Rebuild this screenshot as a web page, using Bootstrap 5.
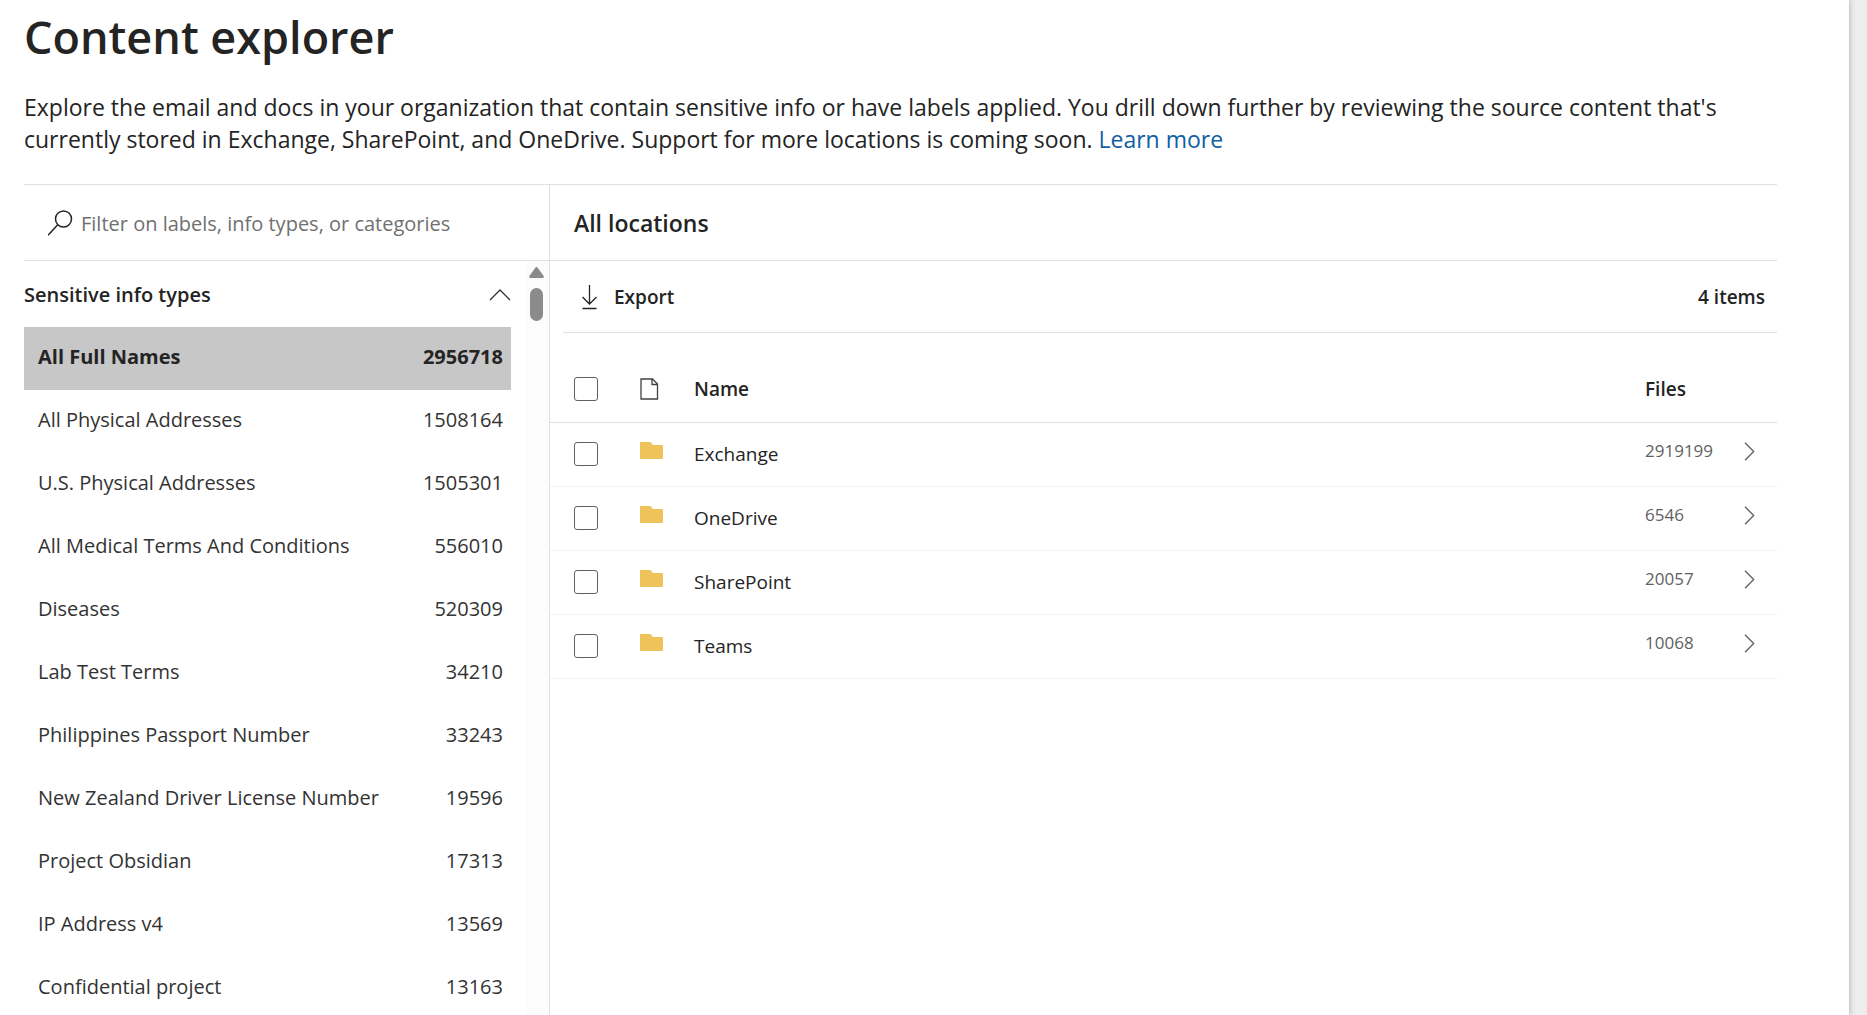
<!DOCTYPE html>
<html lang="en">
<head>
<meta charset="utf-8">
<meta name="viewport" content="width=device-width, initial-scale=1">
<title>Content explorer</title>
<link rel="stylesheet" href="https://cdn.jsdelivr.net/npm/bootstrap@5.3.0/dist/css/bootstrap.min.css">
<style>
body { font-family: "Open Sans", "Noto Sans", sans-serif; font-size: 20px; color: #242424; background: #ededed; }
.shell { height: 100vh; margin-right: 18px; padding: 7px 72px 0 24px; background: #fff; box-shadow: 0 0 6px rgba(0,0,0,.3); }
.page-title { font-size: 45px; line-height: 60px; font-weight: 600; margin-bottom: 24px; }
.intro { font-size: 23px; line-height: 32px; margin-bottom: 29px; }
.intro a { color: #115ea3; text-decoration: none; }
.explorer { border-top: 1px solid #e0e0e0; min-height: 0; }
.side { width: 526px; border-right: 1px solid #e0e0e0; flex-shrink: 0; min-height: 0; }
.bar { height: 76px; border-bottom: 1px solid #e0e0e0; flex-shrink: 0; }
.filter-box { border: 0; outline: 0; background: none; color: #242424; padding: 2px 0 0; line-height: 28px; }
.filter-box::placeholder { color: #707070; opacity: 1; }
.pane-title { font-size: 23px; font-weight: 600; line-height: 32px; margin: 0; }
.group-toggle { height: 66px; width: 100%; border: 0; padding: 2px 0 0; background: none; color: inherit; font-weight: 600; }
.types { width: 487px; overflow: hidden; }
.type-row { height: 63px; padding: 0 8px 3px 14px; color: #333; text-decoration: none; }
.type-row.chosen { background: #c7c7c7; font-weight: 700; color: #242424; }
.track { width: 23px; background: #fcfcfc; padding: 6px 2px 0 0; }
.thumb { width: 13px; height: 33px; margin-top: 10px; border-radius: 7px; background: #8b8b8b; }
.toolbar { height: 72px; margin-left: 13px; padding: 2px 12px 0 18px; border-bottom: 1px solid #e0e0e0; font-size: 19px; font-weight: 600; }
.export-btn { border: 0; background: none; padding: 0; color: inherit; font-weight: 600; gap: 16px; }
.loc-table { width: 100%; margin-top: 24px; font-size: 19px; border-collapse: separate; border-spacing: 0; table-layout: fixed; }
.loc-table th, .loc-table td { height: 64px; padding: 0; vertical-align: middle; border-bottom: 1px solid #f3f3f3; }
.loc-table thead th { height: 66px; font-weight: 600; border-bottom-color: #e0e0e0; }
.loc-table .tick { width: 90px; padding: 0 0 2px 24px; }
.loc-table .kind { width: 54px; padding-bottom: 2px; }
.loc-table .files { width: 99px; }
.loc-table .open { width: 33px; }
.loc-table td.kind { padding-bottom: 9px; }
.loc-table td.files { font-size: 17px; color: #616161; padding-bottom: 7px; }
.loc-table td.open { padding-bottom: 6px; }
.loc-table .form-check-input { width: 24px; height: 24px; margin: 0; border: 1px solid #616161; border-radius: 3px; }
svg { display: block; flex-shrink: 0; }
</style>
<script src="https://cdn.jsdelivr.net/npm/bootstrap@5.3.0/dist/js/bootstrap.bundle.min.js"></script>
</head>
<body class="overflow-hidden">
<svg width="0" height="0" class="position-absolute" aria-hidden="true">
  <symbol id="folder" viewBox="0 0 23 17"><path d="M1 0h9.500l2.500 3h9q1 0 1 1v12q0 1-1 1h-21q-1 0-1-1v-15q0-1 1-1z" fill="#f0c25a"/></symbol>
  <symbol id="next" viewBox="0 0 11 19"><path d="M1 .8 9.700 9.500 1 18.200" fill="none" stroke="#616161" stroke-width="1.300"/></symbol>
</svg>
<main class="shell d-flex flex-column">
  <h1 class="page-title">Content explorer</h1>
  <p class="intro">Explore the email and docs in your organization that contain sensitive info or have labels applied. You drill down further by reviewing the source content that's currently stored in Exchange, SharePoint, and OneDrive. Support for more locations is coming soon. <a href="#">Learn more</a></p>
  <div class="explorer d-flex flex-grow-1">
    <aside class="side d-flex flex-column">
      <div class="bar d-flex align-items-center ps-4">
        <svg width="25" height="26" viewBox="0 0 25 26" class="me-2" fill="none" stroke="#242424" stroke-width="1.500" aria-hidden="true"><circle cx="15.500" cy="9" r="8"/><path d="M9.700 14.800.1 25.200"/></svg>
        <input class="filter-box flex-grow-1" type="text" aria-label="Filter" placeholder="Filter on labels, info types, or categories">
      </div>
      <div class="d-flex flex-grow-1 justify-content-between overflow-hidden">
        <div class="types">
          <button class="group-toggle d-flex align-items-center justify-content-between" type="button" aria-expanded="true">Sensitive info types
            <svg width="22" height="12" viewBox="0 0 22 12" fill="none" stroke="#333" stroke-width="1.300" aria-hidden="true"><path d="M1 11 11 1l10 10"/></svg>
          </button>
          <nav>
            <a href="#" class="type-row chosen d-flex align-items-center justify-content-between"><span>All Full Names</span><span>2956718</span></a>
            <a href="#" class="type-row d-flex align-items-center justify-content-between"><span>All Physical Addresses</span><span>1508164</span></a>
            <a href="#" class="type-row d-flex align-items-center justify-content-between"><span>U.S. Physical Addresses</span><span>1505301</span></a>
            <a href="#" class="type-row d-flex align-items-center justify-content-between"><span>All Medical Terms And Conditions</span><span>556010</span></a>
            <a href="#" class="type-row d-flex align-items-center justify-content-between"><span>Diseases</span><span>520309</span></a>
            <a href="#" class="type-row d-flex align-items-center justify-content-between"><span>Lab Test Terms</span><span>34210</span></a>
            <a href="#" class="type-row d-flex align-items-center justify-content-between"><span>Philippines Passport Number</span><span>33243</span></a>
            <a href="#" class="type-row d-flex align-items-center justify-content-between"><span>New Zealand Driver License Number</span><span>19596</span></a>
            <a href="#" class="type-row d-flex align-items-center justify-content-between"><span>Project Obsidian</span><span>17313</span></a>
            <a href="#" class="type-row d-flex align-items-center justify-content-between"><span>IP Address v4</span><span>13569</span></a>
            <a href="#" class="type-row d-flex align-items-center justify-content-between"><span>Confidential project</span><span>13163</span></a>
          </nav>
        </div>
        <div class="track d-flex flex-column align-items-center" aria-hidden="true">
          <svg width="15" height="11" viewBox="0 0 15 11"><path d="M6.300.8q1.200-1.600 2.400 0l5.800 8q1 2.200-1 2.200h-12q-2 0-1-2.200z" fill="#8b8b8b"/></svg>
          <div class="thumb"></div>
        </div>
      </div>
    </aside>
    <section class="flex-grow-1">
      <div class="bar d-flex align-items-center ps-4"><h2 class="pane-title">All locations</h2></div>
      <div class="toolbar d-flex align-items-center justify-content-between">
        <button class="export-btn d-flex align-items-center" type="button">
          <svg width="17" height="25" viewBox="0 0 17 25" fill="none" stroke="#242424" stroke-width="1.300" aria-hidden="true"><path d="M8.500 0v19M1.500 12l7 7 7-7M1.500 23.500h14"/></svg>Export</button>
        <span>4 items</span>
      </div>
      <table class="loc-table">
        <thead>
          <tr>
            <th class="tick"><input class="form-check-input d-block" type="checkbox" aria-label="Select all"></th>
            <th class="kind"><svg width="19" height="22" viewBox="0 0 19 22" fill="none" stroke="#424242" stroke-width="1.300" role="img" aria-label="Type"><path d="M1 1h11.500l5 5v15h-16.500zM12 1v5.500h5.500"/></svg></th>
            <th>Name</th><th class="files">Files</th><th class="open"></th>
          </tr>
        </thead>
        <tbody>
          <tr><td class="tick"><input class="form-check-input d-block" type="checkbox" aria-label="Select Exchange"></td><td class="kind"><svg width="23" height="17"><use href="#folder"/></svg></td><td>Exchange</td><td class="files">2919199</td><td class="open"><svg width="11" height="19"><use href="#next"/></svg></td></tr>
          <tr><td class="tick"><input class="form-check-input d-block" type="checkbox" aria-label="Select OneDrive"></td><td class="kind"><svg width="23" height="17"><use href="#folder"/></svg></td><td>OneDrive</td><td class="files">6546</td><td class="open"><svg width="11" height="19"><use href="#next"/></svg></td></tr>
          <tr><td class="tick"><input class="form-check-input d-block" type="checkbox" aria-label="Select SharePoint"></td><td class="kind"><svg width="23" height="17"><use href="#folder"/></svg></td><td>SharePoint</td><td class="files">20057</td><td class="open"><svg width="11" height="19"><use href="#next"/></svg></td></tr>
          <tr><td class="tick"><input class="form-check-input d-block" type="checkbox" aria-label="Select Teams"></td><td class="kind"><svg width="23" height="17"><use href="#folder"/></svg></td><td>Teams</td><td class="files">10068</td><td class="open"><svg width="11" height="19"><use href="#next"/></svg></td></tr>
        </tbody>
      </table>
    </section>
  </div>
</main>
</body>
</html>
